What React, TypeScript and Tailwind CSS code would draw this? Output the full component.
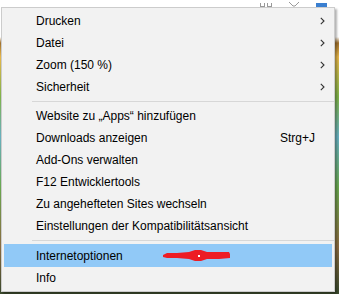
import React from 'react';

type Item = { label: string; sub?: boolean; shortcut?: string; active?: boolean };

const GROUPS: Item[][] = [
  [
    { label: 'Drucken', sub: true },
    { label: 'Datei', sub: true },
    { label: 'Zoom (150 %)', sub: true },
    { label: 'Sicherheit', sub: true },
  ],
  [
    { label: 'Website zu „Apps“ hinzufügen' },
    { label: 'Downloads anzeigen', shortcut: 'Strg+J' },
    { label: 'Add-Ons verwalten' },
    { label: 'F12 Entwicklertools' },
    { label: 'Zu angehefteten Sites wechseln' },
    { label: 'Einstellungen der Kompatibilitätsansicht' },
  ],
  [{ label: 'Internetoptionen', active: true }, { label: 'Info' }],
];

const Chevron = () => (
  <svg width="5" height="8" viewBox="0 0 5 8" className="block">
    <path d="M0.8 0.8 L4 4 L0.8 7.2" fill="none" stroke="#333" strokeWidth="1.1" />
  </svg>
);

const Row: React.FC<{ item: Item }> = ({ item }) => (
  <div
    className={`relative mx-[2px] flex h-[22px] items-center text-[12px] text-black ${
      item.active ? 'h-[23px] bg-[#91c9f7]' : ''
    }`}
  >
    <span className="flex-1 pl-[32px] whitespace-nowrap">{item.label}</span>
    {item.shortcut && <span className="whitespace-nowrap">{item.shortcut}</span>}
    <span className="flex w-[17px] justify-start pl-[5px]">{item.sub && <Chevron />}</span>
    {item.active && (
      // red scribble over the screenshot
      <svg width="68" height="12" viewBox="0 0 68 12" className="absolute left-[159px] top-[6px]">
        <path
          d="M0 5 L4 3 L14 3 L26 2 L32 0 L38 0 L44 2 L56 2 L66 2 L67 4 L67 8 L56 9 L44 9 L38 11 L32 11 L26 9 L14 8 L4 8 L0 7 Z"
          fill="#ed1c24"
        />
        <rect x="35" y="5" width="2" height="2" fill="#fff" />
      </svg>
    )}
  </div>
);

export default function App() {
  return (
    <div
      className="flex h-[294px] w-[339px] flex-col overflow-hidden bg-white"
      style={{ fontFamily: '"Liberation Sans", Arial, sans-serif' }}
    >
      {/* browser toolbar (only bottom edge visible) */}
      <div className="flex h-[7px] items-end justify-end gap-[16px] pr-[12px]">
        <div className="flex gap-[2px]">
          <div className="h-[4px] w-[5px] border border-t-0 border-[#999]" />
          <div className="h-[4px] w-[5px] border border-t-0 border-[#999]" />
        </div>
        <svg width="12" height="5" viewBox="0 0 12 5">
          <path d="M1 0 L5 4 M11 0 L7 4 M5 4 L7 4" stroke="#999" fill="none" />
        </svg>
        <div className="h-[4px] w-[11px] bg-[#3a7fd0]" />
      </div>

      {/* page content beneath the menu */}
      <div className="flex-1 bg-[linear-gradient(to_bottom,#ffffff_0px,#ffffff_30px,#a0702c_36px,#e6b64a_50px,#7fb34a_90px,#68b0c0_130px,#6aa850_180px,#8a6a40_240px,#3d4b2e_284px)]">
        <div className="ml-[1px] w-[334px] border border-[#cccccc] bg-[#f2f2f2] py-[2px] shadow-[2px_2px_2px_rgba(0,0,0,0.3)]">
          {GROUPS.map((group, gi) => (
            <div key={gi}>
              {gi > 0 && (
                <div className="py-[3px]">
                  <div className="ml-[30px] h-px bg-[#d7d7d7]" />
                </div>
              )}
              {group.map(item => (
                <Row key={item.label} item={item} />
              ))}
            </div>
          ))}
        </div>
      </div>
    </div>
  );
}
